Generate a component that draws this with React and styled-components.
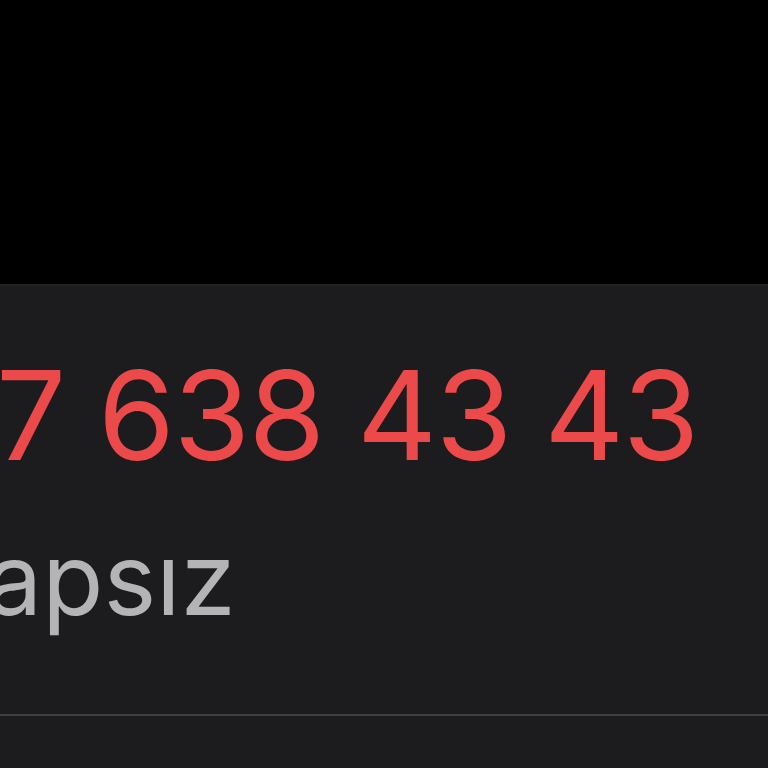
import React from "react";
import styled, { createGlobalStyle } from "styled-components";

const GlobalStyle = createGlobalStyle`
  html, body {
    margin: 0;
    padding: 0;
    background: #000;
    height: 100%;
  }
  #root {
    height: 100%;
  }
`;

const Screen = styled.div`
  height: 768px;
  overflow: hidden;
  display: flex;
  flex-direction: column;
  background: #000;
  font-family: Inter, "Liberation Sans", sans-serif;
`;

const TopArea = styled.div`
  height: 284px;
  flex-shrink: 0;
  background: #000;
`;

const List = styled.div`
  flex: 1;
  background: #1c1c1e;
  border-top: 2px solid #232325;
`;

const Row = styled.div`
  display: flex;
  flex-direction: column;
  height: 430px;
  border-bottom: 2px solid #404042;
  box-sizing: border-box;
  overflow: hidden;
`;

const Number = styled.div`
  color: ${(p) => p.$color};
  font-size: 124px;
  line-height: 1;
  margin-top: 67px;
  margin-left: ${(p) => p.$shift}px;
  white-space: nowrap;
  letter-spacing: -1.5px;
`;

const Status = styled.div`
  color: #b4b4b6;
  font-size: 100px;
  line-height: 1;
  margin-top: 52px;
  margin-left: ${(p) => p.$shift}px;
  white-space: nowrap;
`;

export default function App() {
  return (
    <>
      <GlobalStyle />
      <Screen>
        <TopArea />
        <List>
          <Row>
            <Number $color="#ec4a4a" $shift={-4}>7 638 43 43</Number>
            <Status $shift={-14}>apsız</Status>
          </Row>
        </List>
      </Screen>
    </>
  );
}
